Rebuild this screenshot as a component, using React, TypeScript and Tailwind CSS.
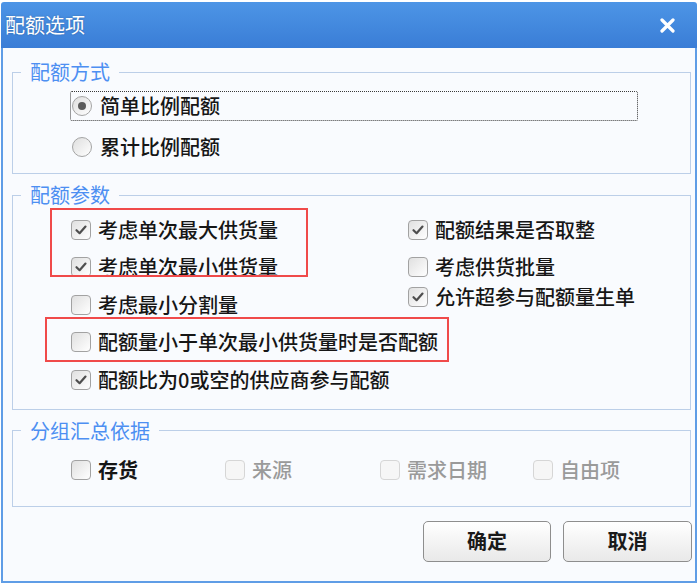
import clsx from 'clsx'

const font = "font-['Noto_Sans_CJK_SC','Noto_Sans',sans-serif]"

function Radio({ checked }: { checked?: boolean }) {
  return (
    <span className="flex h-[20px] w-[20px] shrink-0 items-center justify-center rounded-full border border-[#a4a4a4] bg-linear-to-br from-[#dedede] to-white">
      {checked && <span className="h-[8px] w-[8px] rounded-full bg-[#5c5c5c]" />}
    </span>
  )
}

function CheckBox({ checked, disabled }: { checked?: boolean, disabled?: boolean }) {
  return (
    <span
      className={clsx(
        "flex h-[20px] w-[20px] shrink-0 items-center justify-center rounded-[4px] border",
        disabled ? "border-[#d6d6d6] bg-[#f6f6f6]" : "border-[#a2a2a2] bg-linear-to-br from-[#e0e0e0] to-white"
      )}
    >
      {checked && (
        <svg width="14" height="14" viewBox="0 0 14 14">
          <path d="M2.5 7.2 L5.6 10.2 L11.5 3.6" fill="none" stroke="#4e4e4e" strokeWidth="2.2" strokeLinecap="round" strokeLinejoin="round" />
        </svg>
      )}
    </span>
  )
}

function CheckRow({ label, checked, disabled, bold, height }: { label: string, checked?: boolean, disabled?: boolean, bold?: boolean, height: string }) {
  return (
    <div className={clsx("flex items-center gap-[7px] whitespace-nowrap", height)}>
      <CheckBox checked={checked} disabled={disabled} />
      <span className={clsx("text-[20px] leading-none", disabled ? "text-[#9a9a9a]" : "text-[#161616]", bold ? "font-bold" : "font-medium")}>{label}</span>
    </div>
  )
}

function Group({ title, className, children }: { title: string, className?: string, children: React.ReactNode }) {
  return (
    <fieldset className={clsx("ml-[9px] mr-[4px] border border-[#bccfe8] px-0", className)}>
      <legend className="ml-[8px] h-[20px] px-[9px] text-[20px] leading-[20px] text-[#4d8ff2]">{title}</legend>
      {children}
    </fieldset>
  )
}

export default function App() {
  return (
    <div className={clsx("h-[585px] w-[700px] overflow-hidden bg-white", font)}>
      <div className="ml-[1px] mt-[2px] flex h-[581px] w-[696px] flex-col rounded-t-[3px]">
        <div className="flex h-[46px] shrink-0 items-center justify-between rounded-t-[3px] bg-linear-to-b from-[#4d95e6] to-[#3a7dd6] pl-[4px] pr-[22px]">
          <span className="text-[20px] leading-none text-white [text-shadow:0_0_2px_rgba(0,0,0,0.25)]">配额选项</span>
          <svg width="15" height="15" viewBox="0 0 15 15">
            <path d="M2 2 L13 13 M13 2 L2 13" stroke="white" strokeWidth="3.2" strokeLinecap="round" />
          </svg>
        </div>

        <div className="flex flex-1 flex-col border-x-2 border-b-2 border-[#5f9de6] bg-[#f9fbfe] pt-[14px]">
          <Group title="配额方式">
            <div className="flex flex-col gap-[11px] pb-[11px] pt-[9px]">
              <div className="ml-[57px] flex h-[30px] w-[568px] items-center gap-[8px] rounded-[2px] border border-dotted border-[#3a3a3a] pl-[1px]">
                <Radio checked />
                <span className="text-[20px] font-medium leading-none text-[#161616]">简单比例配额</span>
              </div>
              <div className="ml-[57px] flex h-[30px] w-[568px] items-center gap-[8px] border border-transparent pl-[1px]">
                <Radio />
                <span className="text-[20px] font-medium leading-none text-[#161616]">累计比例配额</span>
              </div>
            </div>
          </Group>

          <Group title="配额参数" className="mt-[11px]">
            <div className="relative flex pb-[10px] pl-[58px] pt-[6px]">
              <div className="flex w-[337px] flex-col">
                <CheckRow label="考虑单次最大供货量" checked height="h-[37.5px]" />
                <CheckRow label="考虑单次最小供货量" checked height="h-[37.5px]" />
                <CheckRow label="考虑最小分割量" height="h-[37.5px]" />
                <CheckRow label="配额量小于单次最小供货量时是否配额" height="h-[37.5px]" />
                <CheckRow label="配额比为0或空的供应商参与配额" checked height="h-[37.5px]" />
              </div>
              <div className="flex flex-col">
                <CheckRow label="配额结果是否取整" checked height="h-[38px]" />
                <CheckRow label="考虑供货批量" height="h-[36px]" />
                <CheckRow label="允许超参与配额量生单" checked height="h-[24px]" />
              </div>
              <div className="absolute left-[37px] top-[3px] h-[69px] w-[258px] border-2 border-[#f04a4a]" />
              <div className="absolute left-[32px] top-[112px] h-[45px] w-[404px] border-2 border-[#f04a4a]" />
            </div>
          </Group>

          <Group title="分组汇总依据" className="mt-[11px]">
            <div className="flex pb-[17px] pl-[58px] pt-[10px]">
              <div className="w-[154px]"><CheckRow label="存货" bold height="h-[38px]" /></div>
              <div className="w-[155px]"><CheckRow label="来源" disabled height="h-[38px]" /></div>
              <div className="w-[153px]"><CheckRow label="需求日期" disabled height="h-[38px]" /></div>
              <div><CheckRow label="自由项" disabled height="h-[38px]" /></div>
            </div>
          </Group>

          <div className="mt-[14px] flex justify-end gap-[12px] pr-[3px]">
            <button className="flex h-[41px] w-[128px] items-center justify-center rounded-[5px] border border-[#8e8e8e] bg-linear-to-b from-white to-[#e9e9e9] text-[20px] font-bold leading-none text-[#1a1a1a]">确定</button>
            <button className="flex h-[41px] w-[129px] items-center justify-center rounded-[5px] border border-[#8e8e8e] bg-linear-to-b from-white to-[#e9e9e9] text-[20px] font-bold leading-none text-[#1a1a1a]">取消</button>
          </div>
        </div>
      </div>
    </div>
  )
}
